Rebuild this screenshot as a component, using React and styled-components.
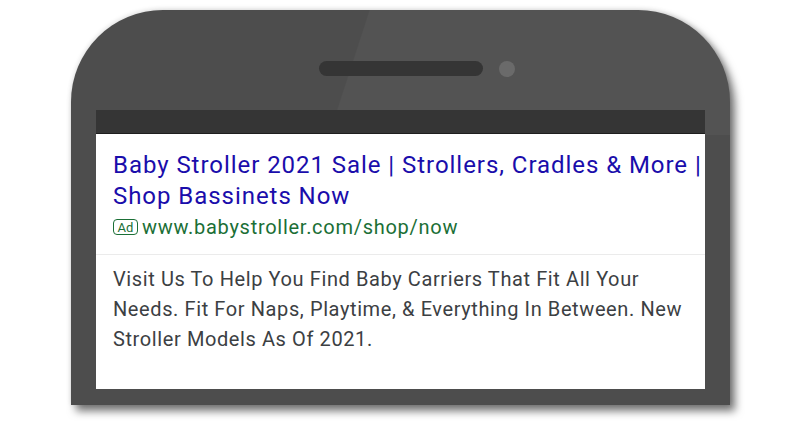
import React from "react";
import styled, { createGlobalStyle } from "styled-components";

const Global = createGlobalStyle`
  html, body { margin: 0; padding: 0; background: #ffffff; }
  body { width: 800px; height: 425px; overflow: hidden; font-family: Roboto, "Liberation Sans", sans-serif; }
`;

const Stage = styled.div`
  width: 800px;
  height: 425px;
  padding: 10px 0 0 71px;
  box-sizing: border-box;
`;

const Phone = styled.div`
  width: 659px;
  height: 395px;
  box-sizing: border-box;
  border-radius: 92px 92px 0 0;
  background:
    linear-gradient(108deg, rgba(255, 255, 255, 0) 42.6%, rgba(255, 255, 255, 0.035) 42.8%) top left / 100% 125px no-repeat,
    #4d4d4d;
  box-shadow: 5px 6px 9px rgba(0, 0, 0, 0.55), 0 -1px 5px rgba(0, 0, 0, 0.12);
  display: flex;
  flex-direction: column;
  padding: 0 25px 16px 25px;
`;

const TopBezel = styled.div`
  height: 100px;
  display: grid;
  grid-template-columns: 1fr auto 1fr;
  align-items: center;
  padding-top: 17px;
  box-sizing: border-box;
`;

const Speaker = styled.div`
  grid-column: 2;
  width: 164px;
  height: 15px;
  border-radius: 8px;
  background: #353535;
`;

const Camera = styled.div`
  grid-column: 3;
  width: 16px;
  height: 16px;
  border-radius: 50%;
  background: #6a6a6a;
  margin-left: 16px;
`;

const Screen = styled.div`
  flex: 1;
  display: flex;
  flex-direction: column;
  background: #ffffff;
`;

const StatusBar = styled.div`
  height: 24px;
  background: #353535;
  border-bottom: 1px solid #1e1e1e;
  box-sizing: border-box;
`;

const AdHeader = styled.div`
  padding: 16px 0 14px 17px;
  border-bottom: 1px solid #ebebeb;
`;

const Title = styled.div`
  font-size: 24px;
  line-height: 31px;
  color: #1a0dab;
  letter-spacing: 0.95px;
`;

const UrlRow = styled.div`
  margin-top: 2px;
  display: flex;
  align-items: center;
  gap: 4px;
  line-height: 26px;
`;

const AdBadge = styled.span`
  display: inline-flex;
  align-items: center;
  justify-content: center;
  width: 25px;
  height: 16px;
  box-sizing: border-box;
  border: 1.5px solid #1b6f36;
  border-radius: 4px;
  color: #1b6f36;
  font-size: 13px;
  line-height: 1;
`;

const Url = styled.span`
  font-size: 20px;
  color: #1b6f36;
  letter-spacing: 0.72px;
`;

const Description = styled.div`
  padding: 9px 0 0 17px;
  font-size: 20px;
  line-height: 30px;
  color: #3c4043;
  letter-spacing: 0.6px;
`;

export default function App() {
  return (
    <>
      <Global />
      <Stage>
        <Phone>
          <TopBezel>
            <Speaker />
            <Camera />
          </TopBezel>
          <Screen>
            <StatusBar />
            <AdHeader>
              <Title>Baby Stroller 2021 Sale | Strollers, Cradles &amp; More | Shop Bassinets Now</Title>
              <UrlRow>
                <AdBadge>Ad</AdBadge>
                <Url>www.babystroller.com/shop/now</Url>
              </UrlRow>
            </AdHeader>
            <Description>
              Visit Us To Help You Find Baby Carriers That Fit All Your Needs. Fit For Naps, Playtime, &amp; Everything In Between. New Stroller Models As Of 2021.
            </Description>
          </Screen>
        </Phone>
      </Stage>
    </>
  );
}
